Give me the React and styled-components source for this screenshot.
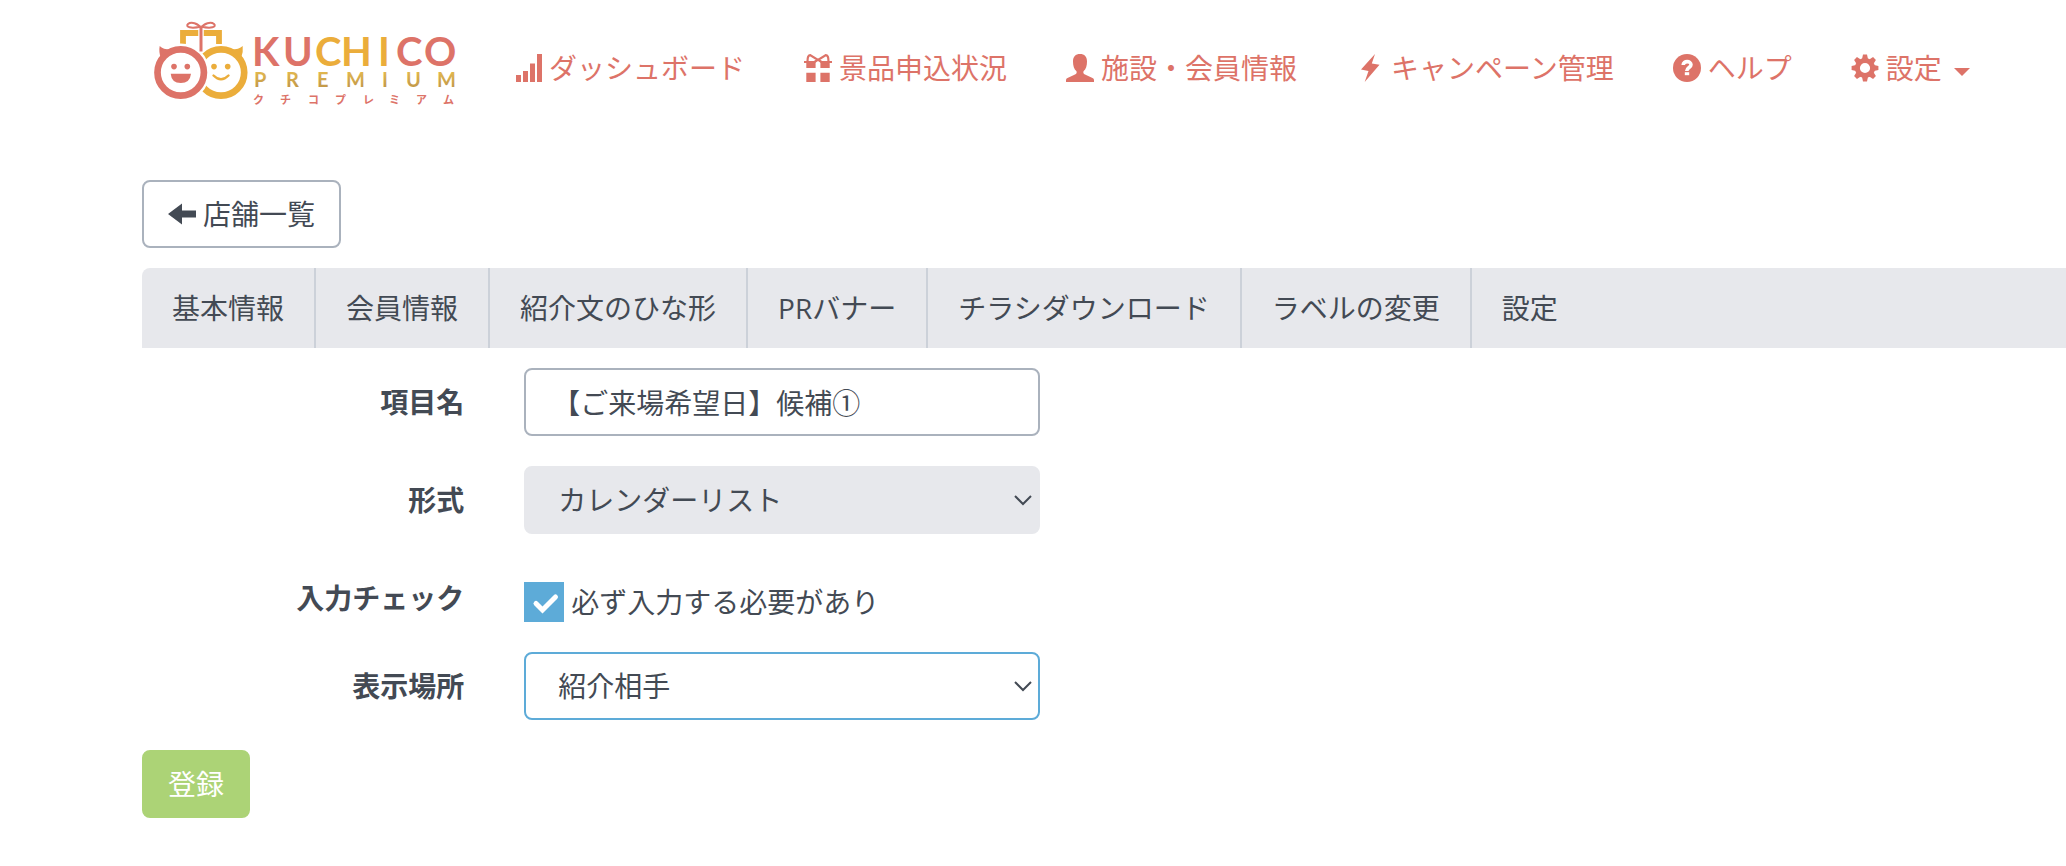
import React, { useState } from "react";
import styled, { createGlobalStyle, ThemeProvider } from "styled-components";

const theme = {
  brand: "#dd7368",
  gold: "#ebad3b",
  text: "#434a54",
  border: "#aab2bd",
  divider: "#ccd1d9",
  muted: "#e7e8ec",
  focus: "#5dabd8",
  success: "#acd376",
};

const GlobalStyle = createGlobalStyle`
  *, *::before, *::after { box-sizing: border-box; }
  body {
    margin: 0;
    background: #fff;
    color: ${theme.text};
    font-family: "Open Sans", "Noto Sans CJK JP", sans-serif;
    font-size: 28px;
    line-height: 40px;
    overflow-x: hidden;
  }
  button, input, select { font: inherit; color: inherit; }
`;

const Header = styled.header`
  display: flex;
  align-items: center;
  gap: 58px;
  min-height: 136px;
  padding-left: 154px;
`;

const LogoLink = styled.a`
  display: flex;
  flex: none;
`;

const GlobalNav = styled.nav`
  display: flex;
  gap: 59px;
  white-space: nowrap;
`;

const NavLink = styled.a`
  display: flex;
  align-items: center;
  gap: 7px;
  color: ${(p) => p.theme.brand};
  text-decoration: none;
`;

const NavMenuButton = styled.button`
  display: flex;
  align-items: center;
  gap: 7px;
  padding: 0;
  border: 0;
  background: none;
  color: ${(p) => p.theme.brand};
  cursor: pointer;
`;

const Caret = styled.span`
  margin: 8px 0 0 5px;
  border: 8px solid transparent;
  border-top-color: currentColor;
  border-bottom: 0;
`;

const Glyph = styled.svg`
  flex: none;
  width: 28px;
  height: 28px;
  fill: currentColor;
`;

const Main = styled.main`
  padding: 44px 0 48px 142px;
`;

const Button = styled.button`
  display: flex;
  align-items: center;
  gap: 7px;
  width: fit-content;
  height: 68px;
  padding: 12px 24px;
  border: 2px solid ${(p) => (p.$primary ? p.theme.success : p.theme.border)};
  border-radius: 8px;
  background: ${(p) => (p.$primary ? p.theme.success : "#fff")};
  color: ${(p) => (p.$primary ? "#fff" : p.theme.text)};
  cursor: pointer;
`;

const TabBar = styled.nav`
  display: flex;
  margin: 20px 0;
  border-radius: 8px 0 0 0;
  background: ${(p) => p.theme.muted};
  white-space: nowrap;
`;

const Tab = styled.a`
  padding: 20px 30px;
  color: inherit;
  text-decoration: none;
  &:not(:last-child) {
    border-right: 2px solid ${(p) => p.theme.divider};
  }
`;

const Form = styled.form`
  display: flex;
  flex-direction: column;
  align-items: flex-start;
  gap: 30px;
`;

const Row = styled.div`
  display: grid;
  grid-template-columns: 5fr 8fr 15fr;
  column-gap: 60px;
  align-items: start;
  width: 100%;
`;

const FieldLabel = styled.label`
  padding-top: 14px;
  font-weight: 700;
  text-align: right;
`;

const TextInput = styled.input`
  width: 100%;
  height: 68px;
  padding: 12px 26px;
  border: 2px solid ${(p) => p.theme.border};
  border-radius: 8px;
  background: #fff;
  outline: 0;
`;

const SelectBox = styled.div`
  position: relative;
`;

const Select = styled.select`
  appearance: none;
  display: block;
  width: 100%;
  height: 68px;
  padding: 12px 32px;
  border: 2px solid ${(p) => p.theme.focus};
  border-radius: 8px;
  background: #fff;
  outline: 0;
  &:disabled {
    border-color: ${(p) => p.theme.muted};
    background: ${(p) => p.theme.muted};
    color: inherit;
    opacity: 1;
  }
`;

const Chevron = styled.svg`
  position: absolute;
  top: 28px;
  right: 7px;
  width: 20px;
  height: 12px;
  fill: none;
  stroke: currentColor;
  stroke-width: 2;
  pointer-events: none;
`;

const CheckLabel = styled.label`
  display: flex;
  align-items: center;
  gap: 7px;
  padding-top: 18px;
  white-space: nowrap;
`;

const CheckBox = styled.span`
  display: grid;
  flex: none;
  width: 40px;
  height: 40px;
  > * { grid-area: 1 / 1; }
`;

const CheckInput = styled.input`
  appearance: none;
  margin: 0;
  border: 2px solid ${(p) => p.theme.focus};
  background: #fff;
  &:checked { background: ${(p) => p.theme.focus}; }
  &:not(:checked) + svg { visibility: hidden; }
`;

const Tick = styled.svg`
  width: 40px;
  height: 40px;
  fill: none;
  stroke: #fff;
  stroke-width: 5;
  stroke-linecap: round;
  pointer-events: none;
`;

const LogoText = styled.text`
  font-family: "Lato", "Noto Sans CJK JP", sans-serif;
  font-size: ${(p) => p.$size}px;
  font-weight: 700;
`;

function Logo() {
  return (
    <svg width="302" height="96" viewBox="14 10 302 96" role="img" aria-label="KUCHICO PREMIUM">
      <defs>
        <linearGradient id="goldFoil" x1="0" y1="0" x2="0" y2="1">
          <stop offset="0.2" stopColor="#e2b84f" />
          <stop offset="0.8" stopColor="#c49a4a" />
        </linearGradient>
      </defs>
      <g fill="none" stroke={theme.gold}>
        <path d="M43 34V23H79V34" strokeWidth="5.8" />
        <circle cx="81" cy="62.5" r="23.2" strokeWidth="6.7" />
        <path d="M73.5 65.5Q81 73 88.500 65.5" strokeWidth="2.4" strokeLinecap="round" />
      </g>
      <path d="M91 39.500Q99 39.500 102.700 36Q103.500 42 101 48.500Z" fill={theme.gold} />
      <circle cx="74" cy="56.600" r="2.800" fill={theme.gold} />
      <circle cx="87.700" cy="56.600" r="2.800" fill={theme.gold} />
      <path d="M61 18V40" stroke="#fff" strokeWidth="5.500" />
      <circle cx="40.700" cy="62.500" r="29" fill="#fff" />
      <circle cx="40.700" cy="62.500" r="23.200" fill="none" stroke={theme.brand} strokeWidth="6.700" />
      <path d="M30.500 39.500Q23 39.500 19.700 36Q18.500 42 21 48.500Z" fill={theme.brand} />
      <circle cx="34" cy="56.600" r="2.800" fill={theme.brand} />
      <circle cx="47.300" cy="56.600" r="2.800" fill={theme.brand} />
      <path d="M30.700 63.700H51Q50 73 40.800 73Q31.500 73 30.700 63.700Z" fill={theme.brand} />
      <g fill="none" stroke={theme.brand} strokeWidth="2">
        <path d="M61 17V41.500" strokeWidth="3" />
        <path d="M61 18C58 13 51 11.500 48 14C45 17 51 19 61 16.500" />
        <path d="M61 18C64 13 71 11.500 74 14C77 17 71 19 61 16.500" />
      </g>
      <LogoText $size={40} y="56" x="112 143 175 201 238 256 284">
        <tspan fill={theme.brand}>KU</tspan>
        <tspan fill={theme.gold}>CHI</tspan>
        <tspan fill={theme.brand}>CO</tspan>
      </LogoText>
      <LogoText $size={20} y="77" x="114 146 177 206 242 266 297" fill="url(#goldFoil)">PREMIUM</LogoText>
      <LogoText $size={11} y="94" x="113 140 168 195 223 249 276 303" fill={theme.brand}>クチコプレミアム</LogoText>
    </svg>
  );
}

const SignalIcon = () => (
  <Glyph viewBox="0 0 28 28" aria-hidden="true">
    <path d="M2 21h5v7H2zM9 17h5v11H9zM16 9.500h5V28h-5zM23 0h5v28h-5z" />
  </Glyph>
);

const GiftIcon = () => (
  <Glyph viewBox="0 0 28 28" aria-hidden="true">
    <path d="M0 7h11.600v7H2.300V9H0zM16.400 7H28v2h-2.300v5h-9.300zM2.300 18.700h9.300V28H2.300zM16.400 18.700h9.300V28h-9.300z" />
    <path d="M3.500 7.500C3.500 3 4.500 1 6.500 1.200L14 6L21.500 1.200C23.500 1 24.500 3 24.500 7.500M10.500 8L14 5.500L17.500 8" fill="none" stroke="currentColor" strokeWidth="2.200" />
  </Glyph>
);

const UserIcon = () => (
  <Glyph viewBox="0 0 28 28" aria-hidden="true">
    <path d="M14 0C9.500 0 7 2.500 7 7.500C7 12 8 15 10.500 17.200C11 19 10.400 19.800 9 20.500L1.500 24Q0 24.700 0 26V28H28V26Q28 24.700 26.500 24L19 20.500C17.600 19.800 17 19 17.500 17.200C20 15 21 12 21 7.500C21 2.500 18.500 0 14 0Z" />
  </Glyph>
);

const FlashIcon = () => (
  <Glyph viewBox="0 0 28 28" aria-hidden="true">
    <path d="M19 0L5 15.500L12.500 17L8.700 28L23.500 10.800L15.800 9.500Z" />
  </Glyph>
);

const HelpIcon = () => (
  <Glyph viewBox="0 0 28 28" aria-hidden="true">
    <circle cx="14" cy="14" r="14" />
    <path d="M10.200 11C10.200 6.500 18 6.500 18 10.700C18 13.600 13.800 13.500 13.800 17" fill="none" stroke="#fff" strokeWidth="3.600" />
    <path d="M11.800 18.200h4.400v3h-4.400z" fill="#fff" />
  </Glyph>
);

const CogIcon = () => (
  <Glyph viewBox="0 0 28 28" aria-hidden="true">
    <circle cx="14" cy="14" r="7.600" fill="none" stroke="currentColor" strokeWidth="5" />
    {[0, 45, 90, 135, 180, 225, 270, 315].map((angle) => (
      <path key={angle} d="M11 5L12 0.600H16L17 5Z" transform={`rotate(${angle} 14 14)`} />
    ))}
  </Glyph>
);

const ArrowLeftIcon = () => (
  <Glyph viewBox="0 0 28 28" aria-hidden="true">
    <path d="M0 14L14 3.500V10.500H28V17.500H14V24.500Z" />
  </Glyph>
);

const navItems = [
  { label: "ダッシュボード", Icon: SignalIcon },
  { label: "景品申込状況", Icon: GiftIcon },
  { label: "施設・会員情報", Icon: UserIcon },
  { label: "キャンペーン管理", Icon: FlashIcon },
  { label: "ヘルプ", Icon: HelpIcon },
];

const tabs = ["基本情報", "会員情報", "紹介文のひな形", "PRバナー", "チラシダウンロード", "ラベルの変更", "設定"];

function SelectField({ id, options, disabled }) {
  return (
    <SelectBox>
      <Select id={id} disabled={disabled}>
        {options.map((option) => (
          <option key={option}>{option}</option>
        ))}
      </Select>
      <Chevron viewBox="0 0 20 12" aria-hidden="true">
        <path d="M2 2L10 10L18 2" />
      </Chevron>
    </SelectBox>
  );
}

export default function App() {
  const [name, setName] = useState("【ご来場希望日】候補①");
  const [required, setRequired] = useState(true);

  return (
    <ThemeProvider theme={theme}>
      <GlobalStyle />
      <Header>
        <LogoLink href="#">
          <Logo />
        </LogoLink>
        <GlobalNav>
          {navItems.map(({ label, Icon }) => (
            <NavLink href="#" key={label}>
              <Icon />
              {label}
            </NavLink>
          ))}
          <NavMenuButton type="button">
            <CogIcon />
            設定
            <Caret />
          </NavMenuButton>
        </GlobalNav>
      </Header>
      <Main>
        <Button type="button">
          <ArrowLeftIcon />
          店舗一覧
        </Button>
        <TabBar>
          {tabs.map((tab) => (
            <Tab href="#" key={tab}>{tab}</Tab>
          ))}
        </TabBar>
        <Form onSubmit={(e) => e.preventDefault()}>
          <Row>
            <FieldLabel htmlFor="item-name">項目名</FieldLabel>
            <TextInput id="item-name" type="text" value={name} onChange={(e) => setName(e.target.value)} />
          </Row>
          <Row>
            <FieldLabel htmlFor="item-format">形式</FieldLabel>
            <SelectField id="item-format" options={["カレンダーリスト"]} disabled />
          </Row>
          <Row>
            <FieldLabel htmlFor="item-required">入力チェック</FieldLabel>
            <CheckLabel>
              <CheckBox>
                <CheckInput
                  id="item-required"
                  type="checkbox"
                  checked={required}
                  onChange={(e) => setRequired(e.target.checked)}
                />
                <Tick viewBox="0 0 40 40" aria-hidden="true">
                  <path d="M12 21.500L18.500 28L31.500 15" />
                </Tick>
              </CheckBox>
              必ず入力する必要があり
            </CheckLabel>
          </Row>
          <Row>
            <FieldLabel htmlFor="item-place">表示場所</FieldLabel>
            <SelectField id="item-place" options={["紹介相手"]} />
          </Row>
          <Button type="submit" $primary>登録</Button>
        </Form>
      </Main>
    </ThemeProvider>
  );
}
